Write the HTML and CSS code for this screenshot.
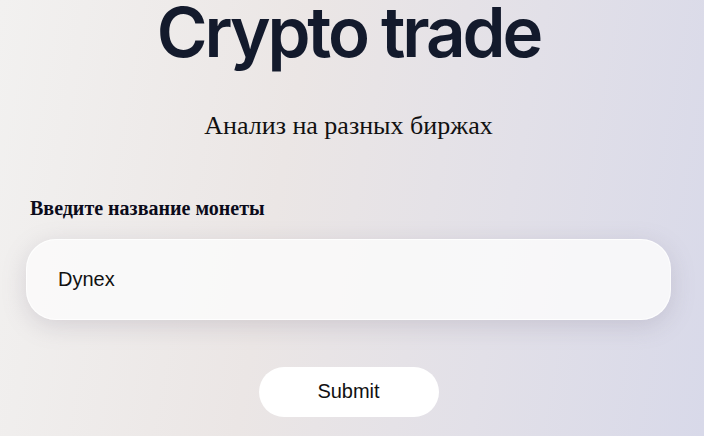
FILE: index.html
```html
<!DOCTYPE html>
<html lang="ru">
<head>
<meta charset="utf-8">
<link rel="stylesheet" href="styles.css">
</head>
<body>
<main class="page">
  <h1 class="title">Crypto trade</h1>
  <p class="subtitle">Анализ на разных биржах</p>
  <form class="form">
    <label class="label" for="coin">Введите название монеты</label>
    <input class="input" id="coin" type="text" value="Dynex">
    <div class="actions">
      <button class="submit" type="button">Submit</button>
    </div>
  </form>
</main>
</body>
</html>
```
FILE: styles.css
```css
html, body {
  margin: 0;
  height: 100%;
}
body {
  background: linear-gradient(100deg, #f2f1f0 0%, #ebe6e5 40%, #e2e0e8 70%, #d8d9e9 100%);
  overflow: hidden;
}
.page {
  display: flex;
  flex-direction: column;
  align-items: center;
  padding: 0 33px 0 26px;
}
.title {
  font-family: Inter, "Noto Sans", sans-serif;
  font-weight: 600;
  font-size: 69px;
  letter-spacing: -0.045em;
  line-height: 0.94;
  color: #131a2c;
  margin: 0;
}
.subtitle {
  font-family: "Liberation Serif", serif;
  font-size: 26px;
  color: #111;
  margin: 46px 0 0 0;
}
.form {
  align-self: stretch;
  display: flex;
  flex-direction: column;
  margin-top: 56px;
}
.label {
  font-family: "Liberation Serif", serif;
  font-weight: 700;
  font-size: 20px;
  color: #0b0b1a;
  margin-left: 4px;
}
.input {
  margin-top: 19px;
  height: 81px;
  box-sizing: border-box;
  border: 1px solid rgba(255,255,255,0.8);
  border-radius: 30px;
  padding: 0 31px;
  background: rgba(251, 250, 251, 0.88);
  box-shadow: 0 6px 24px rgba(120, 110, 130, 0.22);
  font-family: "Liberation Sans", Arial, sans-serif;
  font-size: 20px;
  color: #111;
  outline: none;
}
.actions {
  display: flex;
  justify-content: center;
  margin-top: 47px;
}
.submit {
  width: 180px;
  height: 50px;
  border: none;
  border-radius: 25px;
  background: #fff;
  font-family: "Liberation Sans", Arial, sans-serif;
  font-size: 20px;
  color: #111;
}
```
